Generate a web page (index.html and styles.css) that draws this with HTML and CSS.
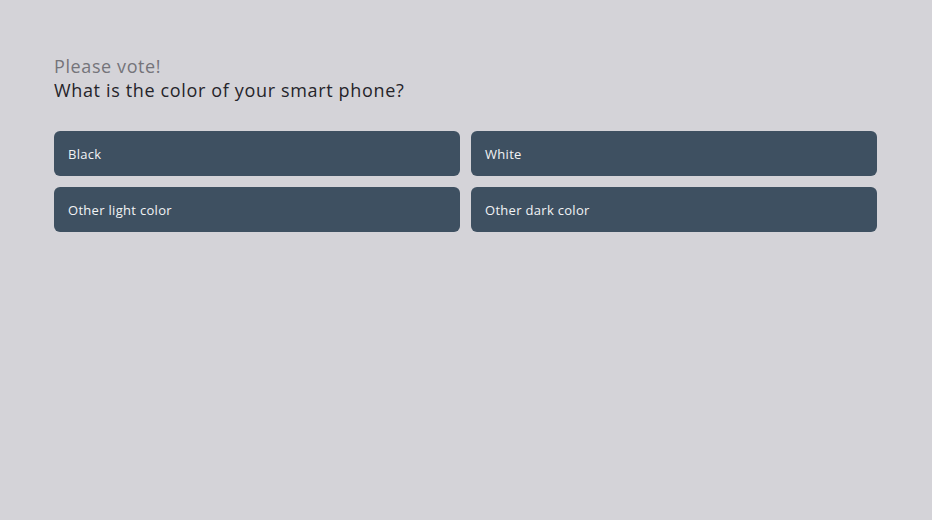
FILE: index.html
```html
<!DOCTYPE html>
<html>
<head>
<meta charset="utf-8">
<link rel="stylesheet" href="styles.css">
</head>
<body>
<div class="poll">
  <div class="intro">Please vote!</div>
  <div class="question">What is the color of your smart phone?</div>
  <div class="options">
    <button class="option">Black</button>
    <button class="option">White</button>
    <button class="option">Other light color</button>
    <button class="option">Other dark color</button>
  </div>
</div>
</body>
</html>
```
FILE: styles.css
```css
html, body {
  margin: 0;
  padding: 0;
  background: #d4d3d8;
  height: 100%;
}
body {
  font-family: "Open Sans", "Liberation Sans", sans-serif;
}
.poll {
  padding: 54px 55px 0 54px;
}
.intro {
  font-size: 18px;
  line-height: 24px;
  color: #75747a;
  letter-spacing: 0.6px;
}
.question {
  font-size: 18px;
  line-height: 24px;
  color: #25242a;
  letter-spacing: 0.65px;
}
.options {
  margin-top: 29px;
  display: grid;
  grid-template-columns: 1fr 1fr;
  gap: 11px;
}
.option {
  height: 45px;
  border: none;
  border-radius: 6px;
  background: #3e5061;
  color: #f2f3f5;
  text-align: left;
  padding: 0 14px;
  font-family: "Open Sans", "Liberation Sans", sans-serif;
  font-size: 13px;
  font-weight: 500;
  letter-spacing: 0.3px;
  cursor: pointer;
}
```
